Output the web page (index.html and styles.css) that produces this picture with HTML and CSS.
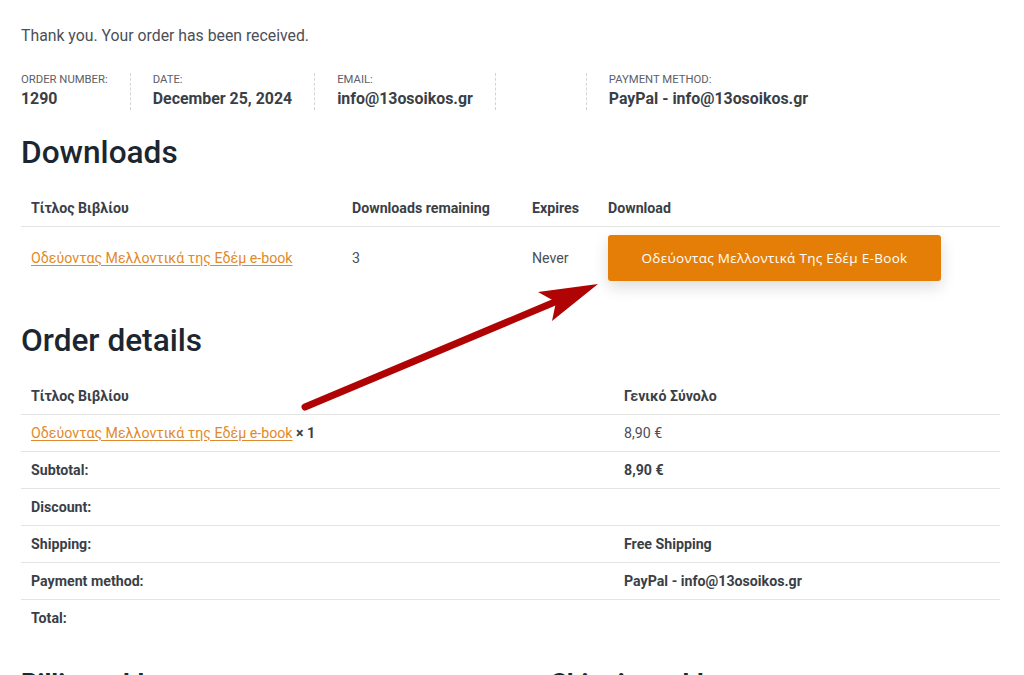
FILE: index.html
```html
<!DOCTYPE html>
<html lang="el">
<head>
<meta charset="utf-8">
<title>Order received</title>
<link rel="stylesheet" href="styles.css">
</head>
<body>
<main class="page">
  <p class="thanks">Thank you. Your order has been received.</p>

  <ul class="overview">
    <li class="ov-item"><span class="ov-label">Order number:</span><strong class="ov-value">1290</strong></li>
    <li class="ov-item"><span class="ov-label">Date:</span><strong class="ov-value">December 25, 2024</strong></li>
    <li class="ov-item"><span class="ov-label">Email:</span><strong class="ov-value">info@13osoikos.gr</strong></li>
    <li class="ov-item ov-empty"></li>
    <li class="ov-item ov-last"><span class="ov-label">Payment method:</span><strong class="ov-value">PayPal - info@13osoikos.gr</strong></li>
  </ul>

  <h2 class="section-title">Downloads</h2>
  <table class="tbl downloads">
    <colgroup>
      <col class="c-prod"><col class="c-rem"><col class="c-exp"><col class="c-dl">
    </colgroup>
    <thead>
      <tr><th>Τίτλος Βιβλίου</th><th>Downloads remaining</th><th>Expires</th><th>Download</th></tr>
    </thead>
    <tbody>
      <tr>
        <td><a class="link" href="#">Οδεύοντας Μελλοντικά της Εδέμ e-book</a></td>
        <td>3</td>
        <td>Never</td>
        <td><a class="btn" href="#">Οδεύοντας Μελλοντικά Της Εδέμ E-Book</a></td>
      </tr>
    </tbody>
  </table>

  <h2 class="section-title details-title">Order details</h2>
  <table class="tbl details">
    <colgroup><col class="c-name"><col class="c-total"></colgroup>
    <thead>
      <tr><th>Τίτλος Βιβλίου</th><th>Γενικό Σύνολο</th></tr>
    </thead>
    <tbody>
      <tr><td><a class="link" href="#">Οδεύοντας Μελλοντικά της Εδέμ e-book</a> <strong class="qty">× 1</strong></td><td>8,90 €</td></tr>
    </tbody>
    <tfoot>
      <tr><th>Subtotal:</th><td><strong>8,90 €</strong></td></tr>
      <tr><th>Discount:</th><td></td></tr>
      <tr><th>Shipping:</th><td><strong>Free Shipping</strong></td></tr>
      <tr><th>Payment method:</th><td><strong>PayPal - info@13osoikos.gr</strong></td></tr>
      <tr class="last"><th>Total:</th><td></td></tr>
    </tfoot>
  </table>

  <section class="addresses">
    <h2 class="addr-title">Billing address</h2>
    <h2 class="addr-title addr-ship">Shipping address</h2>
  </section>
</main>

<svg class="arrow" width="1024" height="675" viewBox="0 0 1024 675" aria-hidden="true">
  <line x1="305" y1="407" x2="562" y2="299" stroke="#b00404" stroke-width="7" stroke-linecap="round"/>
  <polygon points="598,284 538,292 556,302 552,321" fill="#b00404"/>
</svg>
</body>
</html>
```

FILE: styles.css
```css
* { box-sizing: border-box; }

html, body {
  margin: 0;
  padding: 0;
  background: #ffffff;
}

body {
  font-family: Roboto, "Liberation Sans", Arial, sans-serif;
  color: #4b4f58;
  font-size: 14px;
  overflow: hidden;
  height: 675px;
}

.page {
  padding: 24px 24px 0 21px;
  width: 1024px;
}

.thanks {
  margin: 0;
  font-size: 15.8px;
  line-height: 24px;
  color: #4b4f58;
}

.overview {
  list-style: none;
  margin: 25px 0 0 0;
  padding: 0;
  display: flex;
}

.ov-item {
  display: flex;
  flex-direction: column;
  padding: 0 22px;
  border-right: 1px dashed #d4d4d4;
}

.ov-item:first-child { padding-left: 0; }
.ov-empty { width: 91px; }
.ov-last { border-right: none; }

.ov-label {
  font-size: 11.3px;
  line-height: 14px;
  text-transform: uppercase;
  color: #5c6068;
}

.ov-value {
  font-size: 15.9px;
  line-height: 23px;
  font-weight: 700;
  color: #3a3f47;
}

.section-title {
  margin: 23px 0 0 0;
  font-size: 31.6px;
  line-height: 40px;
  font-weight: 500;
  color: #1c2631;
}

.details-title { margin-top: 32px; }

.tbl {
  width: 979px;
  border-collapse: collapse;
  margin-top: 17px;
  font-size: 14.2px;
}

.tbl th,
.tbl td {
  text-align: left;
  padding: 8px 10px;
  line-height: 20px;
  vertical-align: middle;
}

.tbl th { font-weight: 700; color: #3a3f47; }

.tbl thead th { border-bottom: 1px solid #e4e4e4; }

.downloads tbody td { padding-top: 8px; padding-bottom: 8px; }

.c-prod { width: 321px; }
.c-rem { width: 180px; }
.c-exp { width: 76px; }
.c-dl { width: 402px; }

.c-name { width: 593px; }
.c-total { width: 386px; }

.details { margin-top: 17px; }

.details tbody td,
.details tfoot th,
.details tfoot td { border-bottom: 1px solid #e4e4e4; }

.details tfoot tr.last th,
.details tfoot tr.last td { border-bottom: none; }

.details td strong { color: #3a3f47; }

.qty { color: #3a3f47; font-weight: 700; }

.link {
  color: #df8a2a;
  text-decoration: underline;
  text-underline-offset: 2px;
}

.btn {
  display: inline-flex;
  align-items: center;
  justify-content: center;
  width: 333px;
  height: 46px;
  background: #e57e07;
  color: #ffffff;
  text-decoration: none;
  border-radius: 3px;
  font-family: "Open Sans", "Noto Sans", sans-serif;
  font-size: 13.5px;
  letter-spacing: 0.3px;
  box-shadow: 0 6px 16px rgba(0, 0, 0, 0.14);
}

.addresses {
  display: flex;
  margin-top: 31px;
}

.addr-title {
  margin: 0;
  font-size: 26px;
  line-height: 32px;
  font-weight: 700;
  color: #1c2631;
  width: 530px;
}

.addr-ship { width: auto; }

.arrow {
  position: absolute;
  left: 0;
  top: 0;
  pointer-events: none;
}
```
